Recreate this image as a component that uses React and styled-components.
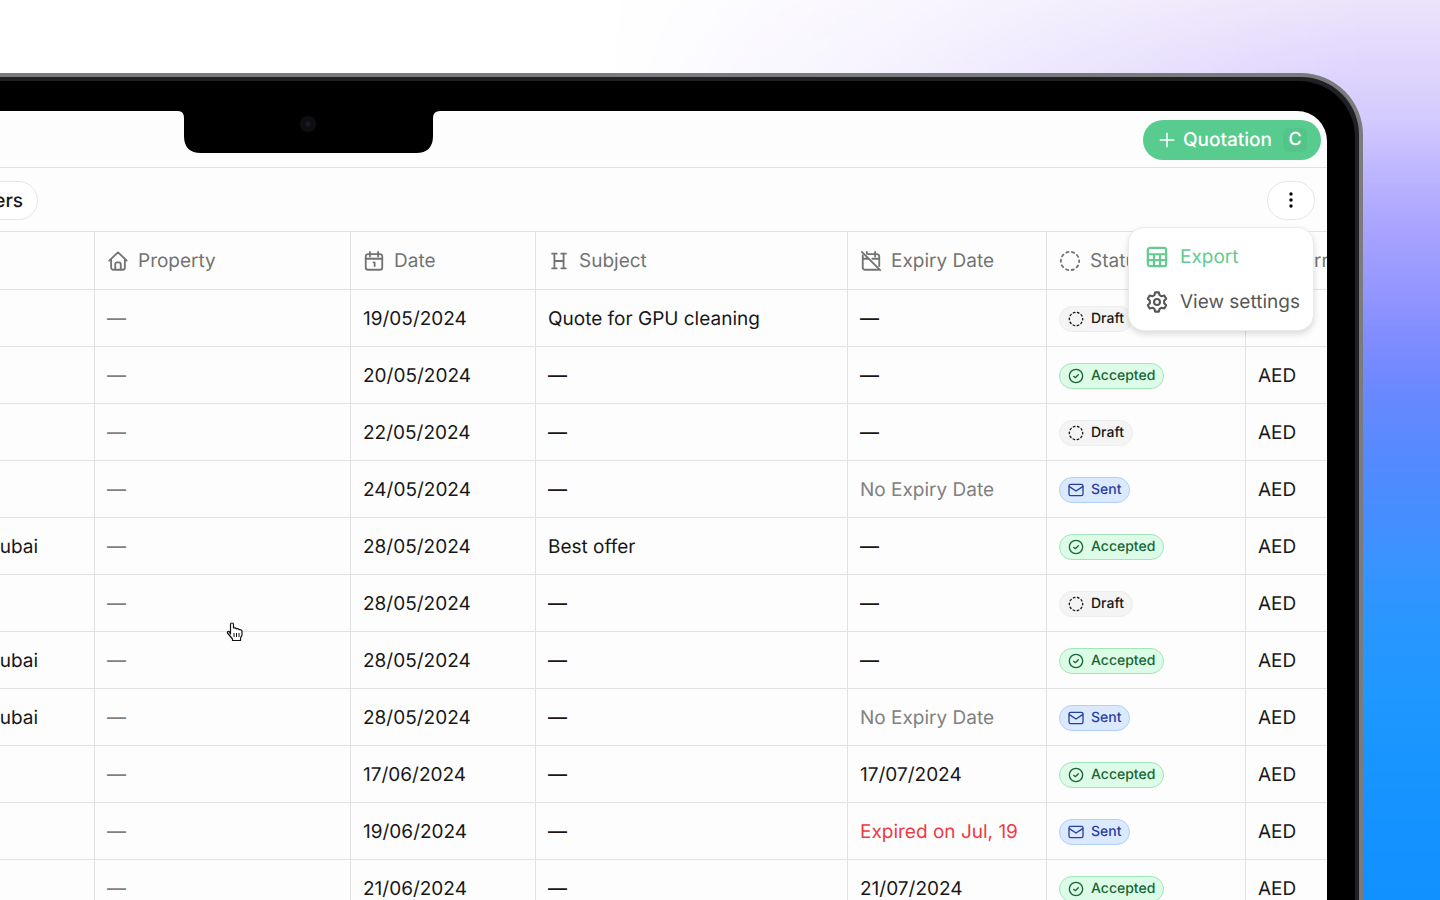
import React from 'react';
import styled, { createGlobalStyle, css } from 'styled-components';

const GlobalStyle = createGlobalStyle`
  *, *::before, *::after { box-sizing: border-box; }
  body {
    margin: 0;
    background: #fff;
    font-family: Inter, "Liberation Sans", sans-serif;
    color: #171717;
    text-rendering: geometricPrecision;
  }
  button { font-family: inherit; text-rendering: inherit; }
`;

const Page = styled.main`
  height: 100vh;
  overflow: hidden;
  display: flex;
  background:
    linear-gradient(90deg, #fff 0%, #fff 42%, rgba(255, 255, 255, 0.7) 62%, rgba(255, 255, 255, 0.4) 75%, rgba(255, 255, 255, 0.12) 88%, rgba(255, 255, 255, 0) 95%) top / 100% 76px no-repeat,
    linear-gradient(180deg, #ece4fb 0%, #e2d8fd 6%, #d4cbfe 13%, #beb6ff 19%, #a6a2ff 26%, #9597ff 32%, #7e8cff 38%, #6888ff 44%, #548afe 51%, #448eff 58%, #3594ff 64%, #2896ff 70%, #1f98ff 77%, #1693ff 89%, #1190ff 100%);
`;

const Device = styled.div`
  position: relative;
  flex: 1;
  min-width: 0;
  margin: 73px 77px 0 -80px;
  border: 4px solid #7b7b7e;
  border-width: 4px 4px 0 0;
  border-radius: 0 62px 0 0;
  background: #202124;
  padding: 4px 4px 0 0;
  display: flex;
`;

const Bezel = styled.div`
  flex: 1;
  min-width: 0;
  display: flex;
  background: #000;
  border-radius: 0 56px 0 0;
  padding: 30px 28px 0 0;
`;

const Screen = styled.div`
  position: relative;
  flex: 1;
  min-width: 0;
  overflow: hidden;
  background: #fdfdfd;
  border-radius: 0 30px 0 0;
`;

const Notch = styled.svg`
  position: absolute;
  top: 33px;
  left: 258px;
`;

const TopBar = styled.header`
  height: 57px;
  padding: 1px 6px 0;
  display: flex;
  align-items: center;
  justify-content: flex-end;
  border-bottom: 1px solid #e2e2e2;
`;

const PrimaryButton = styled.button`
  height: 40px;
  padding: 0 14px 0 15px;
  display: flex;
  align-items: center;
  gap: 7px;
  border: 0;
  border-radius: 20px;
  background: #58cb8e;
  color: #fff;
  font-size: 19px;
  font-weight: 500;
  line-height: 24px;
`;

const Shortcut = styled.kbd`
  width: 24px;
  height: 24px;
  margin-left: 4px;
  display: grid;
  place-items: center;
  border-radius: 6px;
  background: #54c58a;
  font: inherit;
  font-size: 18px;
`;

const Toolbar = styled.div`
  height: 63px;
  padding: 1px 12px 0 32px;
  display: flex;
  align-items: center;
  justify-content: space-between;
`;

const OutlineButton = styled.button`
  height: 39px;
  min-width: 48px;
  padding: 0 14px;
  display: flex;
  align-items: center;
  justify-content: center;
  border: 1px solid #e5e5e5;
  border-radius: 20px;
  background: #fff;
  color: #171717;
  font-size: 19px;
  font-weight: 500;
`;

const Table = styled.table`
  width: calc(100% + 119px);
  table-layout: fixed;
  border-collapse: separate;
  border-spacing: 0;
  border-top: 1px solid #e2e2e2;
  font-size: 19px;
  line-height: 24px;
`;

const cell = css`
  height: 57px;
  padding: 1px 12px 0;
  border-bottom: 1px solid #e2e2e2;
  border-right: 1px solid #e2e2e2;
  text-align: left;
  font-weight: 400;
  white-space: nowrap;
`;

const HeadCell = styled.th`
  ${cell}
  height: 58px;
  color: #737373;
`;

const Cell = styled.td`
  ${cell}
  color: ${(p) => (p.$tone === 'muted' ? '#808080' : p.$tone === 'danger' ? '#ee3a43' : '#171717')};
`;

const PlaceCell = styled(Cell)`
  padding-right: 56px;
  text-align: right;
`;

const HeadLabel = styled.span`
  display: flex;
  align-items: center;
  gap: 9px;
`;

const badgeTones = {
  Draft: css`background: #f4f4f4; border-color: #ededed; color: #171717;`,
  Accepted: css`background: #dcfce7; border-color: #a0e6b9; color: #166534;`,
  Sent: css`background: #dbe9fe; border-color: #b0cffc; color: #26409c;`,
};

const StatusBadge = styled.span`
  height: 26px;
  padding: 0 8px;
  display: inline-flex;
  align-items: center;
  vertical-align: middle;
  gap: 7px;
  border: 1px solid;
  border-radius: 13px;
  font-size: 14px;
  font-weight: 500;
  line-height: 20px;
  ${(p) => badgeTones[p.$status]}
`;

const Menu = styled.div`
  position: absolute;
  top: 116px;
  right: 13px;
  width: 186px;
  padding: 6px 8px;
  border: 1px solid #ebebeb;
  border-radius: 16px;
  background: #fff;
  box-shadow: 0 3px 6px rgba(0, 0, 0, 0.14);
`;

const MenuItem = styled.button`
  width: 100%;
  height: 45px;
  padding: 0 0 0 9px;
  display: flex;
  align-items: center;
  gap: 12px;
  border: 0;
  background: none;
  color: ${(p) => (p.$active ? '#62ca92' : '#575757')};
  font-size: 19px;
  line-height: 24px;
  white-space: nowrap;
`;

const Pointer = styled.svg`
  position: absolute;
  top: 511px;
  left: 306px;
`;

const IconSvg = styled.svg`
  flex: none;
`;

const iconPaths = {
  home: <><path d="M2.500 11.500 12 2.500l9.500 9M4.500 10v9A2.500 2.500 0 0 0 7 21.500h10a2.500 2.500 0 0 0 2.500-2.500v-9" /><path d="M9 21v-5.500a2 2 0 0 1 2-2h2a2 2 0 0 1 2 2V21" /></>,
  calendar: <><rect x="3" y="4.500" width="18" height="17" rx="2.500" /><path d="M3 9.500h18M7.500 2v5M16.500 2v5M11.500 13.500l1.200 .3v3.700" /></>,
  heading: <path d="M7 4v16M17 4v16M7 12h10M4.500 4h5M14.500 4h5M4.500 20h5M14.500 20h5" />,
  calendarOff: <><path d="M2 2l20 20M3 6v13a2.500 2.500 0 0 0 2.500 2.500H20M9 4.500h9.500A2.500 2.500 0 0 1 21 7v10.500M3 9.500h6M13.500 9.500H21M16.500 2v5M7.500 2v2" /></>,
  dashed: <circle cx="12" cy="12" r="10" strokeDasharray="2.400 3.883" strokeDashoffset="1.200" />,
  check: <><circle cx="12" cy="12" r="10" /><path d="m8.500 12.500 2.500 2 4.500-4.500" /></>,
  mail: <><rect x="1.500" y="3.500" width="21" height="17" rx="2.500" /><path d="m2 7 10 6.500L22 7" /></>,
  sheet: <><rect x="2" y="2" width="20" height="20" rx="2.500" /><path d="M2 9h20M2 15.500h20M8.700 9v13M15.300 9v13" /></>,
  gear: <><circle cx="12" cy="12" r="3.200" /><path d="M10 1.500h4l.8 3 2.200 1.300 3-.9 2 3.500-2.200 2.200v2.800l2.200 2.200-2 3.500-3-.9-2.200 1.300-.8 3h-4l-.8-3L7 18.200l-3 .9-2-3.500 2.200-2.200v-2.800L2 8.400l2-3.500 3 .9 2.200-1.300z" /></>,
  plus: <path d="M12 3v18M3 12h18" />,
  money: <><circle cx="12" cy="12" r="10" /><path d="M8 12h8" /></>,
};

const Icon = ({ name, size = 22, weight = 2 }) => (
  <IconSvg width={size} height={size} viewBox="0 0 24 24" fill="none" stroke="currentColor" strokeWidth={weight} strokeLinecap="round" strokeLinejoin="round" aria-hidden="true">
    {iconPaths[name]}
  </IconSvg>
);

const columns = [
  { label: '', width: 175 },
  { label: 'Property', icon: 'home', width: 256 },
  { label: 'Date', icon: 'calendar', width: 185 },
  { label: 'Subject', icon: 'heading' },
  { label: 'Expiry Date', icon: 'calendarOff', width: 199 },
  { label: 'Status', icon: 'dashed', width: 199 },
  { label: 'Currency', icon: 'money', width: 200 },
];

const rows = [
  ['', '19/05/2024', 'Quote for GPU cleaning', '—', 'Draft'],
  ['', '20/05/2024', '—', '—', 'Accepted', 'AED'],
  ['', '22/05/2024', '—', '—', 'Draft', 'AED'],
  ['', '24/05/2024', '—', 'No Expiry Date', 'Sent', 'AED'],
  ['Dubai', '28/05/2024', 'Best offer', '—', 'Accepted', 'AED'],
  ['', '28/05/2024', '—', '—', 'Draft', 'AED'],
  ['Dubai', '28/05/2024', '—', '—', 'Accepted', 'AED'],
  ['Dubai', '28/05/2024', '—', 'No Expiry Date', 'Sent', 'AED'],
  ['', '17/06/2024', '—', '17/07/2024', 'Accepted', 'AED'],
  ['', '19/06/2024', '—', 'Expired on Jul, 19', 'Sent', 'AED'],
  ['', '21/06/2024', '—', '21/07/2024', 'Accepted', 'AED'],
];

const statusIcons = { Draft: 'dashed', Accepted: 'check', Sent: 'mail' };

const expiryTone = (text) =>
  text.startsWith('No') ? 'muted' : text.startsWith('Expired') ? 'danger' : undefined;

export default function App() {
  return (
    <>
      <GlobalStyle />
      <Page>
        <Device>
          <Bezel>
            <Screen>
              <TopBar>
                <PrimaryButton>
                  <Icon name="plus" size={18} />
                  Quotation
                  <Shortcut>C</Shortcut>
                </PrimaryButton>
              </TopBar>
              <Toolbar>
                <OutlineButton>Filters</OutlineButton>
                <OutlineButton aria-label="More options">
                  <svg width="4" height="16" viewBox="0 0 4 16" aria-hidden="true">
                    <circle cx="2" cy="2" r="1.700" /><circle cx="2" cy="8" r="1.700" /><circle cx="2" cy="14" r="1.700" />
                  </svg>
                </OutlineButton>
              </Toolbar>
              <Table>
                <colgroup>
                  {columns.map((c) => <col key={c.label} width={c.width} />)}
                </colgroup>
                <thead>
                  <tr>
                    {columns.map((c) => (
                      <HeadCell key={c.label} scope="col">
                        {c.icon && <HeadLabel><Icon name={c.icon} />{c.label}</HeadLabel>}
                      </HeadCell>
                    ))}
                  </tr>
                </thead>
                <tbody>
                  {rows.map(([place, date, subject, expiry, status, currency], i) => (
                    <tr key={i}>
                      <PlaceCell>{place}</PlaceCell>
                      <Cell $tone="muted">—</Cell>
                      <Cell>{date}</Cell>
                      <Cell>{subject}</Cell>
                      <Cell $tone={expiryTone(expiry)}>{expiry}</Cell>
                      <Cell>
                        <StatusBadge $status={status}>
                          <Icon name={statusIcons[status]} size={16} />
                          {status}
                        </StatusBadge>
                      </Cell>
                      <Cell>{currency}</Cell>
                    </tr>
                  ))}
                </tbody>
              </Table>
              <Menu>
                <MenuItem $active><Icon name="sheet" weight={2.4} />Export</MenuItem>
                <MenuItem><Icon name="gear" weight={2.3} />View settings</MenuItem>
              </Menu>
              <Pointer width="18" height="20" viewBox="0 0 18 20" aria-hidden="true">
                <path d="M4.500 12V2.500a1.500 1.500 0 0 1 3 0V6c2-.5 2.500 0 2.800.8 1.500-.4 2.400 0 2.700.8 2-.3 3 .5 3 2V13l-1.500 3v2.500h-8V17L1.500 11c-.5-1.500 1-2 2-1z" fill="#fff" stroke="#111" strokeWidth="1.200" strokeLinejoin="round" />
                <path d="M8 11v4M10.500 11v4M13 11v4" stroke="#111" strokeWidth="1" />
              </Pointer>
            </Screen>
          </Bezel>
          <Notch width="262" height="43" viewBox="0 0 262 43" aria-hidden="true">
            <path d="M0 0H262V1Q255 1 255 8V26Q255 43 238 43H23Q6 43 6 26V8Q6 1 0 1Z" />
            <circle cx="130" cy="14" r="8" fill="#0e0e12" />
            <circle cx="130" cy="14" r="2.500" fill="#191a2b" />
          </Notch>
        </Device>
      </Page>
    </>
  );
}
